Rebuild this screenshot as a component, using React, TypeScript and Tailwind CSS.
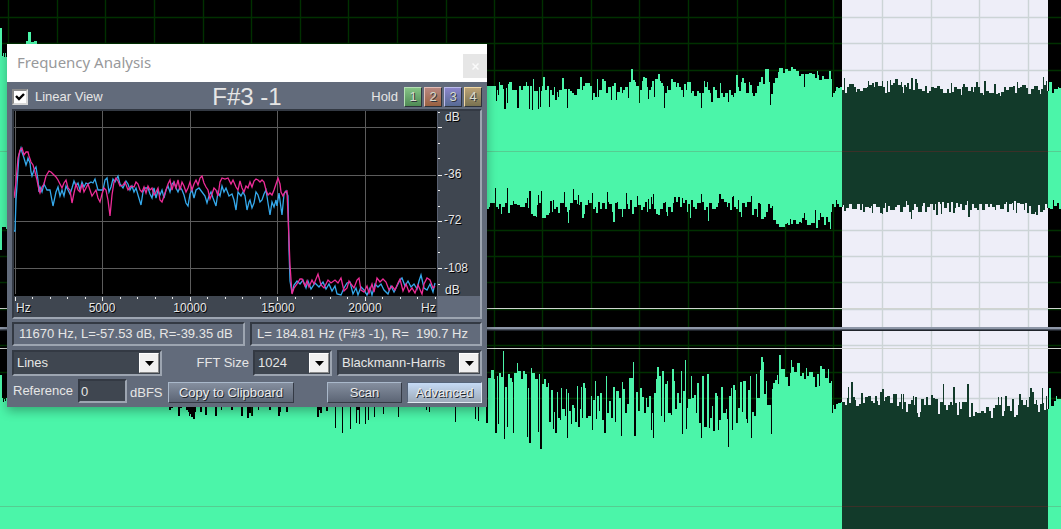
import { useState } from 'react';
import type { ReactNode } from 'react';
import clsx from 'clsx';

// Envelopes are step lists: "x y" pairs, each level holds until the next x
const LEFT_TOP =
  '0 28 2 56 3 53 4 57 5 53 6 57 26 41 28 32 31 42 34 41 37 60 487 86 496 101 497 90 498 95 499 82 500 85 503 89 504 109 506 88 507 103 508 84 509 82 512 90 517 108 519 86 521 90 523 86 526 82 527 86 529 109 530 86 532 110 533 79 534 91 538 109 539 87 540 107 541 91 542 86 543 77 545 90 547 86 549 107 550 90 552 95 554 87 555 100 557 92 558 97 559 90 562 78 564 89 567 108 568 89 570 91 572 93 574 95 577 89 580 77 582 90 583 86 585 83 590 86 592 100 593 93 595 97 597 79 598 97 599 90 602 79 604 81 606 93 608 87 611 100 612 86 614 83 616 100 617 92 620 87 622 93 623 90 625 87 628 98 629 82 631 69 633 80 635 82 636 86 639 103 640 90 642 81 643 77 645 78 647 87 648 99 649 90 651 87 652 81 654 97 655 79 658 74 660 81 661 83 663 86 664 108 665 93 667 86 668 90 671 79 673 82 676 87 677 83 679 87 681 90 683 97 684 84 686 90 687 82 691 93 692 91 694 96 697 91 699 93 701 108 702 93 704 81 705 87 707 82 708 90 710 93 711 102 713 87 715 90 717 98 720 83 721 93 723 97 725 93 728 102 729 90 731 95 733 97 734 93 736 75 738 87 739 91 741 82 742 78 744 83 746 93 749 82 750 85 752 93 753 96 755 93 757 86 759 82 761 77 763 84 765 69 769 82 770 105 771 94 773 83 775 78 778 72 779 68 783 73 785 69 788 71 791 67 793 69 796 71 799 76 801 74 804 87 805 74 809 73 812 74 815 78 817 71 818 75 819 80 822 76 824 79 829 71 831 79 832 97 833 93 835 91 836 87 838 88 840 87 842 90 844 78 845 93 847 87 849 84 854 87 856 92 857 89 860 91 863 88 867 87 868 81 869 85 872 83 874 87 875 82 878 86 882 81 883 87 885 93 887 81 888 92 890 80 891 85 893 83 895 79 898 85 901 82 902 87 903 93 904 85 906 87 907 83 909 89 911 78 913 90 915 79 917 83 918 89 922 91 925 86 927 93 929 91 931 87 934 88 937 86 940 89 943 93 947 89 949 93 951 83 952 92 954 87 957 89 961 95 962 87 963 84 965 87 968 91 971 87 973 92 974 87 976 82 978 87 980 93 983 95 984 81 986 91 989 93 994 84 996 94 998 93 1000 96 1001 92 1004 87 1006 90 1009 87 1013 86 1015 93 1017 82 1018 88 1020 87 1022 85 1026 88 1028 94 1031 89 1034 86 1038 90 1040 94 1041 89 1043 77 1044 85 1046 81 1047 91 1049 82 1052 93 1054 89 1058 87 1059 88 1061 88';

const LEFT_BOTTOM =
  '0 250 2 227 6 229 487 209 489 207 490 203 495 188 496 207 498 209 499 204 501 214 502 207 505 203 507 188 508 213 510 205 513 201 514 204 517 205 520 207 525 203 527 198 528 208 529 191 531 214 533 216 536 217 537 205 538 195 539 203 541 191 542 218 546 215 549 213 550 201 552 212 553 200 554 209 556 207 558 213 560 203 564 192 565 207 567 212 568 223 569 210 570 203 573 189 574 200 577 204 578 195 579 205 580 202 582 218 584 214 585 205 588 200 589 203 592 193 593 209 595 207 596 213 598 202 600 209 602 203 605 209 607 192 608 202 609 204 612 212 613 222 615 203 617 202 618 209 622 217 623 209 626 193 627 204 628 209 630 200 632 214 634 207 637 196 638 205 641 210 643 207 645 202 647 212 648 199 649 209 651 197 652 204 653 194 654 209 656 214 658 215 660 209 663 203 665 202 666 212 667 216 668 207 671 212 673 203 674 197 676 202 678 197 680 207 682 198 683 203 685 200 687 212 688 204 690 218 691 200 693 207 695 209 697 203 701 194 702 202 704 210 706 207 708 221 709 203 712 209 716 207 718 203 719 194 721 199 724 202 727 207 728 203 730 210 732 197 733 196 734 207 736 209 738 200 739 212 741 217 742 203 745 207 747 202 751 196 752 215 754 209 757 217 758 203 760 204 761 219 764 217 766 212 768 204 770 208 772 206 773 220 776 224 779 227 785 224 787 223 788 225 790 219 791 224 793 220 796 224 799 222 801 223 802 218 804 213 805 220 807 225 811 223 815 210 816 228 818 220 820 213 821 217 824 225 826 217 828 222 830 229 831 212 832 204 834 207 836 200 837 204 839 207 843 205 844 211 846 208 849 204 852 209 857 204 860 210 862 204 863 212 865 207 869 208 871 206 872 213 873 204 876 207 880 213 882 214 883 208 885 203 886 212 888 206 890 210 895 207 897 205 900 212 903 207 906 201 907 205 909 212 911 219 912 210 914 204 916 207 918 212 922 206 923 203 925 212 927 207 930 204 933 210 935 204 936 215 938 202 940 204 941 214 942 202 944 208 947 203 949 212 951 202 953 213 955 208 956 203 958 207 960 204 962 210 965 205 967 201 968 217 970 210 972 204 974 208 977 210 979 204 982 210 985 204 988 207 990 204 992 207 995 210 996 205 1000 209 1004 204 1006 202 1007 212 1009 204 1012 203 1013 210 1014 201 1016 213 1017 203 1020 204 1024 210 1025 203 1027 213 1029 206 1031 214 1035 212 1036 215 1038 205 1040 212 1043 210 1045 204 1047 208 1050 209 1053 200 1054 206 1057 203 1059 209 1061 209';

const RIGHT_TOP =
  '0 375 2 398 3 402 4 399 5 401 6 398 168 402 169 410 171 408 173 402 178 416 180 408 182 402 186 410 188 412 189 416 190 414 191 417 193 419 195 412 196 402 200 412 202 402 205 415 207 402 215 416 217 402 221 410 222 402 231 410 233 402 241 416 243 402 247 418 249 413 251 416 253 402 258 410 259 402 269 410 271 402 278 416 280 412 281 402 286 412 288 402 317 417 319 410 320 413 322 402 326 411 328 402 335 428 336 402 342 433 343 402 350 429 351 402 356 423 357 410 359 424 360 402 365 424 366 402 368 420 369 402 374 417 375 402 383 414 384 402 398 417 399 402 426 410 427 402 429 412 430 402 455 422 456 402 475 419 476 402 478 421 479 402 486 423 488 378 491 370 494 379 495 433 497 376 498 424 499 373 501 377 503 351 504 439 505 387 507 427 508 374 510 378 512 382 513 433 514 373 517 363 518 371 521 379 523 371 525 374 527 437 528 388 529 443 531 368 532 373 535 379 538 432 539 374 540 449 542 384 544 379 546 387 548 383 549 422 551 390 553 429 554 412 555 433 557 392 558 418 560 420 561 388 562 409 565 416 566 389 567 438 568 393 569 411 571 424 572 405 574 408 575 422 577 386 578 427 580 409 581 387 582 418 583 383 585 388 586 418 588 416 591 396 592 430 593 400 595 381 596 419 597 396 599 411 600 393 602 420 604 433 606 376 607 413 609 401 611 418 613 387 615 422 616 391 619 398 621 436 622 382 623 389 625 413 627 404 629 378 633 362 634 436 636 392 638 411 640 388 642 397 644 413 646 398 647 407 649 396 651 430 652 413 653 438 654 393 656 379 657 367 659 376 661 416 662 371 664 422 665 384 667 381 668 413 671 415 672 369 674 381 675 409 677 393 679 403 681 371 682 434 683 391 685 360 686 429 687 408 688 399 691 376 692 398 694 395 696 413 697 383 699 423 701 438 702 376 704 427 707 374 709 428 710 418 712 406 713 431 715 393 717 396 718 430 719 420 721 387 723 413 726 409 727 419 728 447 729 396 731 388 732 430 733 385 735 390 736 423 738 408 740 382 742 412 743 381 746 419 747 423 748 390 750 376 751 438 752 412 754 416 756 374 757 398 760 370 761 357 763 362 764 394 766 381 767 405 771 434 772 389 773 383 775 380 777 375 778 384 779 355 781 369 785 377 788 386 790 373 791 360 792 367 794 372 797 363 800 376 802 373 804 379 806 368 807 376 809 372 813 377 815 387 817 374 819 386 820 366 822 369 825 378 828 369 829 383 831 381 832 413 833 405 834 409 836 404 838 403 841 402 845 405 847 398 848 387 849 403 851 382 853 397 855 400 856 406 859 404 861 393 863 403 865 397 868 396 871 401 873 403 875 396 877 401 878 405 880 392 882 389 884 401 885 397 887 396 890 403 893 394 897 406 899 402 901 394 902 409 903 394 904 402 906 412 908 404 911 400 913 396 914 405 915 397 917 413 918 417 920 412 921 399 924 405 926 397 928 405 931 395 933 398 935 399 938 414 940 402 943 384 944 405 946 410 948 405 950 402 952 405 953 387 955 403 957 415 959 402 960 409 962 402 967 384 969 417 971 403 973 416 975 412 977 413 981 411 984 413 986 407 989 411 991 418 993 408 995 405 998 397 999 405 1001 397 1002 416 1004 411 1005 396 1007 406 1010 411 1012 399 1014 417 1016 415 1018 405 1019 394 1021 400 1023 405 1026 400 1027 407 1029 397 1030 388 1032 392 1034 404 1036 400 1037 405 1038 412 1040 404 1042 388 1043 403 1044 410 1046 396 1047 409 1049 388 1051 406 1054 401 1056 396 1057 399 1061 399';

const SPECTRUM_LEFT =
  '14,231 15,231 16,200 17,185 19,155 21,148 22,152 24,158 26,165 27,162 28,158 30,163 31,172 32,176 34,170 36,167 38,180 39,192 40,187 42,192 44,184 47,190 50,190 53,206 56,192 58,187 60,196 62,190 64,196 66,186 68,190 70,194 72,188 74,181 76,186 78,183 80,190 82,182 84,187 86,183 88,184 91,182 93,183 95,179 98,190 100,190 103,190 105,180 107,178 109,192 111,187 113,179 115,182 118,176 120,184 123,188 126,181 128,184 130,190 132,186 134,192 136,188 138,195 141,205 143,192 145,188 148,188 150,194 152,198 154,188 156,198 158,190 160,195 162,190 164,198 166,190 168,186 170,192 172,184 174,182 176,188 178,192 180,187 182,190 184,195 186,203 188,206 190,194 192,190 194,198 196,190 199,188 202,192 205,196 207,203 209,196 211,192 213,198 216,206 218,192 220,196 222,186 224,192 226,188 229,196 232,194 234,200 236,210 238,192 241,196 243,192 245,196 247,210 249,202 250,200 252,208 254,203 256,192 258,195 260,202 262,200 264,194 266,190 268,203 270,215 272,202 274,207 276,200 277,206 279,193 281,208 282,215 284,194 286,191 288,196 289,250 290,281 292,293 294,285 297,281 300,284 303,280 306,288 308,281 311,289 315,283 319,287 323,282 326,289 329,284 332,291 335,286 337,294 341,295 344,288 347,283 350,282 353,294 356,288 358,295 361,287 364,290 367,295 370,288 372,295 375,284 378,287 381,284 384,290 388,294 391,286 394,292 397,286 400,280 402,278 405,286 408,281 411,287 414,284 417,289 419,281 421,275 424,288 427,290 430,284 433,292 435,283';

const SPECTRUM_RIGHT =
  '14,198 16,182 18,158 20,150 22,148 24,155 26,152 28,152 29,156 31,162 33,165 35,172 37,180 39,190 40,193 42,187 44,184 46,176 49,171 51,172 53,174 56,177 58,180 60,184 62,188 64,183 66,180 68,188 70,190 72,203 74,193 76,184 78,190 80,192 82,184 84,192 86,188 88,184 90,190 92,196 94,193 96,190 98,198 100,202 102,194 104,188 106,190 108,200 110,216 112,195 114,182 116,178 118,181 120,186 123,185 125,182 128,190 131,186 134,187 136,182 138,184 140,190 142,192 144,187 146,193 148,186 150,190 152,188 154,195 156,192 158,188 160,200 162,202 164,196 166,190 168,184 170,180 172,190 174,182 176,188 178,180 180,190 182,182 184,186 186,192 188,188 190,182 192,190 194,184 196,180 198,185 200,178 202,176 204,183 206,187 208,190 210,199 212,194 214,188 216,190 218,196 220,182 222,178 225,179 228,178 231,184 233,180 236,187 238,190 240,181 242,188 244,192 246,186 248,188 250,182 252,187 254,181 256,179 258,180 260,182 262,180 264,182 266,190 268,195 270,193 272,195 274,190 276,184 278,178 280,184 281,192 283,196 285,192 287,191 288,215 289,240 290,265 292,294 294,288 297,284 300,279 302,279 305,286 307,281 309,287 312,280 314,284 318,274 321,285 324,288 328,280 331,283 335,280 338,283 341,278 344,291 347,288 349,281 351,284 354,288 357,280 359,278 361,290 364,292 367,286 369,293 372,284 374,292 377,278 380,282 383,279 386,282 389,290 392,286 395,290 398,283 400,279 403,291 406,284 409,292 412,288 415,293 418,285 422,294 424,284 427,278 430,280 433,288 435,286';

const GRID_X = [8, 57, 105, 154, 203, 251, 300, 348, 397, 446, 494, 542, 591, 639, 688, 737, 785, 833, 882, 931, 979, 1028];

function parseSteps(steps: string) {
  const nums = steps.split(' ').map(Number);
  const points: [number, number][] = [];
  for (let i = 0; i < nums.length; i += 2) {
    points.push([nums[i], nums[i + 1]]);
  }
  return points;
}

// Fills between two step envelopes, or down to the floor when there is no lower one
function wavePath(top: string, bottom?: string) {
  const upper = parseSteps(top)
    .map(([x, y], i) => (i ? `H${x}V${y}` : `M${x} ${y}`))
    .join('');
  if (!bottom) return `${upper}V529H0Z`;
  const lower = parseSteps(bottom)
    .reverse()
    .map(([x, y]) => `V${y}H${x}`)
    .join('');
  return `${upper}${lower}Z`;
}

interface ChannelProps {
  id: string;
  label: string;
  y: number;
  height: number;
  gridY: number[];
  boundary: number;
  center: number;
  path: string;
  className: string;
}

function Channel({ id, label, y, height, gridY, boundary, center, path, className }: ChannelProps) {
  const grid = [
    ...GRID_X.map((x) => `M${x}.5 ${y}v${height}`),
    ...gridY.map((gy) => `M0 ${gy}.5H1061`),
  ].join('');

  return (
    <svg
      className={clsx('block w-full min-h-0', className)}
      viewBox={`0 ${y} 1061 ${height}`}
      preserveAspectRatio="none"
      role="img"
      aria-label={label}
    >
      <clipPath id={id}>
        <rect x="842" y={y} width="206" height={height} />
      </clipPath>
      <path d={grid} stroke="#003000" strokeWidth="1.4" fill="none" />
      <path d={path} fill="#4bf5a9" />
      <path d={`M0 ${center}.5H1061`} stroke="#55cd91" />
      <g clipPath={`url(#${id})`}>
        <rect x="842" y={y} width="206" height={height} fill="#eeeef8" />
        <path d={grid} stroke="#ccd4d6" strokeWidth="1.4" fill="none" />
        <path d={path} fill="#123a2a" />
        <path d={`M842 ${center}.5H1048`} stroke="#3b3028" />
      </g>
      <path d={`M0 ${boundary}.5H1061`} stroke="#d0d4d0" />
    </svg>
  );
}

const FREQ_LABELS = [
  { x: 102, text: '5000' },
  { x: 190, text: '10000' },
  { x: 278, text: '15000' },
  { x: 365, text: '20000' },
];

const DB_LABELS = [
  { y: 178, text: '-36' },
  { y: 224, text: '-72' },
  { y: 272, text: '-108' },
];

const MINOR_DB = [112, 143, 158, 190, 206, 237, 252, 284];
const MAJOR_DB = [127, 175, 221, 268];

function SpectrumChart() {
  return (
    <svg
      className="block w-full"
      viewBox="14 111 466 206"
      role="img"
      aria-label="Spectrum"
      fontSize="12"
      fill="#e8e8e8"
    >
      <rect x="14" y="111" width="423" height="185" fill="#000" />
      <rect x="14" y="296" width="424" height="21" fill="#3f4650" />
      <rect x="437" y="111" width="43" height="185" fill="#3f4650" />
      <path d="M437.5 111V317" stroke="#586070" />
      <path
        d="M15.5 111V294M102.5 111V294M190.5 111V294M277.5 111V294M365.5 111V294M14 127.5H436M14 175.5H436M14 221.5H436M14 268.5H436"
        stroke="#5c5c5c"
        fill="none"
      />
      <polyline points={SPECTRUM_LEFT} fill="none" stroke="#35a9ec" strokeWidth="1.3" />
      <polyline points={SPECTRUM_RIGHT} fill="none" stroke="#ee2c98" strokeWidth="1.3" />

      {Array.from({ length: 25 }, (_, i) => (
        <rect key={i} x={15 + Math.floor(i * 17.5)} y="297" width="1" height={i % 5 ? 2 : 4} />
      ))}
      {MINOR_DB.map((y) => (
        <rect key={y} x="438" y={y} width="2" height="1" />
      ))}
      {MAJOR_DB.map((y) => (
        <rect key={y} x="438" y={y} width="4" height="1" />
      ))}

      <g className="[text-shadow:1px_1px_0_#000]">
        <text x="16" y="312">Hz</text>
        {FREQ_LABELS.map((l) => (
          <text key={l.text} x={l.x} y="312" textAnchor="middle">
            {l.text}
          </text>
        ))}
        <text x="421" y="312">Hz</text>
        <text x="445" y="121">dB</text>
        {DB_LABELS.map((l) => (
          <text key={l.text} x="444" y={l.y}>
            {l.text}
          </text>
        ))}
        <text x="445" y="294">dB</text>
      </g>
    </svg>
  );
}

const sunken = 'border-2 border-t-[#333943] border-l-[#333943] border-b-[#9da5b1] border-r-[#9da5b1]';

function Select({ label, options, className }: { label: string; options: string[]; className: string }) {
  return (
    <div className={clsx('relative h-[26px] bg-[#3f4650]', sunken, className)}>
      <select
        aria-label={label}
        className="block w-full h-full appearance-none bg-transparent pl-[3px] pr-6 text-[13px] text-[#e6e6e6] outline-none"
      >
        {options.map((o) => (
          <option key={o} className="bg-[#3f4650]">
            {o}
          </option>
        ))}
      </select>
      <span className="pointer-events-none absolute right-[1px] top-[1px] h-5 w-5 bg-[#f0f0f0] border border-white border-b-[#8a8a8a] border-r-[#8a8a8a] flex items-center justify-center">
        <svg width="9" height="5" viewBox="0 0 9 5">
          <path d="M0 0H9L4.5 5Z" fill="#000" />
        </svg>
      </span>
    </div>
  );
}

function PushButton({ children, className }: { children: ReactNode; className: string }) {
  return (
    <button
      className={clsx(
        'mt-[2px] h-[21px] border text-[13px] leading-none text-[#ececec] [text-shadow:1px_1px_0_#20252c]',
        className
      )}
    >
      {children}
    </button>
  );
}

const holds = [
  { n: 1, color: 'from-[#86c486] to-[#4f8a55] border-t-[#b4e0b4] border-l-[#b4e0b4]' },
  { n: 2, color: 'from-[#b98880] to-[#9a6140] border-t-[#e4bdb6] border-l-[#e4bdb6]' },
  { n: 3, color: 'from-[#8c86cc] to-[#566a94] border-t-[#bcbcec] border-l-[#bcbcec]' },
  { n: 4, color: 'from-[#bba277] to-[#797250] border-t-[#f0d8a4] border-l-[#f0d8a4]' },
];

function FrequencyDialog() {
  const [linear, setLinear] = useState(true);

  return (
    <section
      role="dialog"
      aria-labelledby="dialog-title"
      className="absolute left-[7px] top-[44px] w-[480px] bg-[#626b7b] shadow-[0_4px_10px_rgba(0,0,0,0.3)]"
    >
      <header className="flex h-[38px] items-center justify-between bg-white pl-[10px]">
        <h1 id="dialog-title" className="font-['Noto_Sans',sans-serif] text-[15px] leading-9 self-start text-[#98999b]">
          Frequency Analysis
        </h1>
        <button aria-label="Close" className="mt-[10px] flex h-6 w-6 items-center justify-center self-start bg-[#e6e6e6]">
          <svg width="7" height="7" viewBox="0 0 7 7">
            <path d="M.5 .5L6.5 6.5M6.5 .5L.5 6.5" stroke="#fafafa" strokeWidth="1.5" />
          </svg>
        </button>
      </header>

      <div className="px-[5px] pb-1 text-[13px] text-[#e6e6e6]">
        <div className="grid h-[27px] grid-cols-[1fr_auto_1fr] items-center pt-[2px]">
          <label className="flex items-center gap-[7px]">
            <span className="relative h-4 w-4">
              <input
                type="checkbox"
                checked={linear}
                onChange={(e) => setLinear(e.target.checked)}
                className="block h-4 w-4 appearance-none border-2 border-[#8b8b8b] border-b-[#d8d8d8] border-r-[#d8d8d8] bg-white"
              />
              {linear && (
                <svg className="pointer-events-none absolute inset-0" width="16" height="16" viewBox="0 0 16 16">
                  <path d="M4 7L7 10L12 5" stroke="#000" strokeWidth="2.4" fill="none" />
                </svg>
              )}
            </span>
            Linear View
          </label>
          <span className="text-2xl leading-none">F#3 -1</span>
          <div className="flex items-center justify-end gap-[2px]">
            <span className="mr-1">Hold</span>
            {holds.map((h) => (
              <button
                key={h.n}
                className={clsx(
                  'h-5 w-[18px] border border-b-[#2d323b] border-r-[#2d323b] bg-linear-to-b text-[13px] leading-none text-[#d8dccf] [text-shadow:1px_1px_0_#30353c]',
                  h.color
                )}
              >
                {h.n}
              </button>
            ))}
          </div>
        </div>

        <div className={sunken}>
          <SpectrumChart />
        </div>

        <div className="mt-[3px] flex gap-[5px] whitespace-pre">
          <output className={clsx('flex h-6 w-[233px] items-center pl-[5px]', sunken)}>
            11670 Hz, L=-57.53 dB, R=-39.35 dB
          </output>
          <output className={clsx('flex h-6 flex-1 items-center pl-[5px]', sunken)}>
            {'L= 184.81 Hz (F#3 -1), R=  190.7 Hz'}
          </output>
        </div>

        <div className="mt-1 flex items-center">
          <Select label="Style" options={['Lines', 'Area', 'Bars']} className="w-[150px]" />
          <span className="ml-auto mr-1">FFT Size</span>
          <Select label="FFT Size" options={['1024', '2048', '4096']} className="w-[79px]" />
          <Select label="Window" options={['Blackmann-Harris', 'Hamming', 'Hanning']} className="ml-[5px] w-[145px]" />
        </div>

        <div className="mt-[3px] flex items-center">
          <label htmlFor="reference" className="ml-px w-[65px]">
            Reference
          </label>
          <input
            id="reference"
            defaultValue="0"
            className={clsx('h-6 w-[49px] bg-[#3f4650] pl-px outline-none', sunken)}
          />
          <span className="ml-[3px] mt-1">dBFS</span>
          <PushButton className="ml-auto w-[126px] border-[#a9b8ca] border-b-[#343a45] border-r-[#343a45] bg-linear-to-b from-[#858f9f] to-[#5c6575]">
            Copy to Clipboard
          </PushButton>
          <PushButton className="ml-[33px] w-[75px] border-[#a9b8ca] border-b-[#343a45] border-r-[#343a45] bg-linear-to-b from-[#858f9f] to-[#5c6575]">
            Scan
          </PushButton>
          <PushButton className="ml-[5px] w-[75px] border-[#56657a] border-b-[#e0e8f0] border-r-[#e0e8f0] bg-linear-to-b from-[#c5daf5] to-[#9eabba]">
            Advanced
          </PushButton>
        </div>
      </div>
    </section>
  );
}

export default function App() {
  return (
    <main className="relative flex h-screen flex-col overflow-hidden bg-black font-['Liberation_Sans',Arial,sans-serif]">
      <Channel
        id="selection-left"
        label="Left channel"
        y={0}
        height={327}
        gridY={[17, 43, 70, 230, 256, 282, 309]}
        boundary={308}
        center={151}
        path={wavePath(LEFT_TOP, LEFT_BOTTOM)}
        className="flex-[327]"
      />
      <div className="h-1 shrink-0 border-t-2 border-b border-t-[#8e97a8] border-b-[#20242b] bg-[#4b5361]" />
      <Channel
        id="selection-right"
        label="Right channel"
        y={331}
        height={198}
        gridY={[345, 372, 398]}
        boundary={348}
        center={506}
        path={wavePath(RIGHT_TOP)}
        className="flex-[198]"
      />
      <FrequencyDialog />
    </main>
  );
}
